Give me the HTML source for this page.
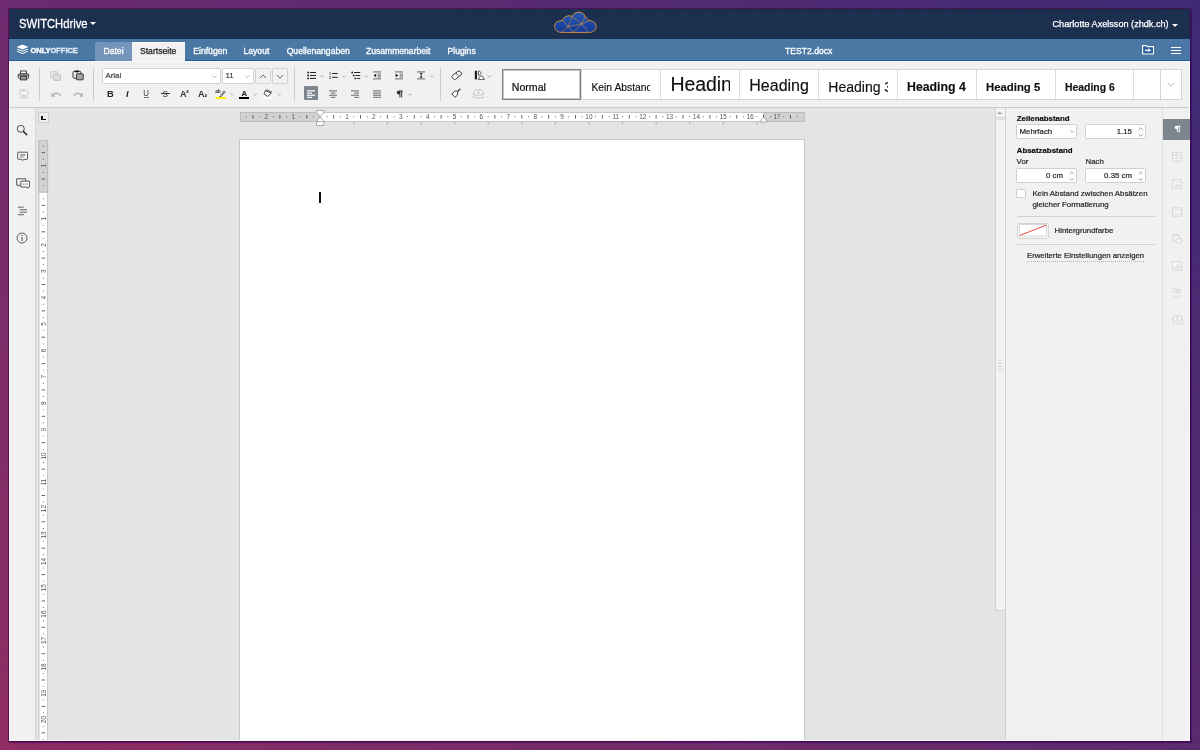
<!DOCTYPE html>
<html>
<head>
<meta charset="utf-8">
<title>TEST2.docx</title>
<style>
*{box-sizing:border-box;margin:0;padding:0}
html,body{width:1200px;height:750px;overflow:hidden}
body{font-family:"Liberation Sans",sans-serif;font-size:7.85px;color:#2a2a2a;position:relative;
 background:#6b2c74;}
#bg{position:absolute;left:0;top:0;width:1200px;height:750px;background:linear-gradient(to right,#6d2b6f 0%,#3f2b75 100%)}
#bg2{position:absolute;left:0;top:0;width:1200px;height:750px;background:linear-gradient(to right,#8f2e63 0%,#5b2b6e 100%);
 -webkit-mask-image:linear-gradient(to bottom,rgba(0,0,0,0) 0%,rgba(0,0,0,1) 100%);mask-image:linear-gradient(to bottom,rgba(0,0,0,0) 0%,rgba(0,0,0,1) 100%)}
#wout{position:absolute;left:9px;top:9px;width:1181px;height:732px;background:#f9f9f9;box-shadow:0 0 0 1px rgba(70,0,70,0.6),1px 1px 1px 1px rgba(40,0,90,0.45)}
#wout .e1{position:absolute;left:0;top:0;width:1px;height:30px;background:#2b2c58}
#wout .e2{position:absolute;left:0;top:30px;width:1px;height:22px;background:#4b77a4;border-bottom:1px solid #1f5c95}
#win{will-change:transform;position:absolute;left:10px;top:9px;width:1180px;height:732px;background:#e4e4e4;overflow:hidden}
.abs{position:absolute}
.t{position:absolute;white-space:nowrap;line-height:1;-webkit-text-stroke:0.22px}
/* header */
#hdr{position:absolute;left:0;top:0;width:1180px;height:30px;background:#1c3050;background-image:repeating-linear-gradient(to right,rgba(0,0,0,0.07) 0,rgba(0,0,0,0.07) 1px,rgba(0,0,0,0) 1px,rgba(0,0,0,0) 3px);box-shadow:inset 0 1px 0 #14324c,inset 0 -1px 0 #17304e}
#tabs{position:absolute;left:0;top:30px;width:1180px;height:22px;background:#4b77a4;border-bottom:1px solid #1f5c95}
#tabs .t{color:#fff;font-size:8.6px;top:7.5px;-webkit-text-stroke:0.3px #fff}
#tool{position:absolute;left:0;top:52px;width:1180px;height:47px;background:#f1f1f1;border-bottom:1px solid #cbcbcb;border-top:1px solid #fafafa}
#left{position:absolute;left:0;top:99px;width:26px;height:633px;background:#f1f1f1;border-right:1px solid #d5d5d5}
#right{position:absolute;left:995px;top:99px;width:157px;height:633px;background:#f1f1f1;border-left:1px solid #d0d0d0}
#strip{position:absolute;left:1152px;top:99px;width:28px;height:633px;background:#f1f1f1;border-left:1px solid #dedede}
#page{position:absolute;left:229px;top:130px;width:566px;height:620px;background:#fff;border:1px solid #c6c8ca}
.sep{position:absolute;width:1px;background:#cbcbcb;top:7px;height:33px}
.box{position:absolute;background:#fff;border:1px solid #cfcfcf;border-radius:1.5px}
.sepv{position:absolute;top:67.5px;height:33px;width:1px;background:#cdcdcd}
.btn{position:absolute;background:#f1f1f1;border:1px solid #d2d2d2;border-radius:1.5px}
.gi{position:absolute;top:70px;width:79px;height:29px;border-left:1px solid #dcdcdc;overflow:hidden}
.gi span{position:absolute;left:10px;width:59px;overflow:hidden;white-space:nowrap;line-height:1;color:#111;display:block;padding-bottom:6px;-webkit-text-stroke:0.15px}
.rb{font-weight:bold;color:#111}
</style>
</head>
<body>
<div id="bg"></div><div id="bg2"></div>
<div id="wout"><div class="e1"></div><div class="e2"></div></div>
<div id="win">
 <div id="hdr">
  <div class="t" id="sw" style="left:8.5px;top:7.5px;font-size:13px;color:#fff;-webkit-text-stroke:0.3px #fff;transform-origin:0 0;transform:scaleX(0.862)">SWITCHdrive</div>
  <div class="abs" style="left:79.6px;top:12.6px;width:0;height:0;border-left:3.1px solid transparent;border-right:3.1px solid transparent;border-top:3.2px solid #fff"></div>
  <svg class="abs" style="left:530px;top:-4px" width="70" height="40" viewBox="0 0 1200 686"><defs><linearGradient id="cg" x1="0" y1="0" x2="0" y2="1"><stop offset="0" stop-color="#2a58b4"/><stop offset="1" stop-color="#123a98"/></linearGradient></defs>
   <path d="M372 470 C300 470 250 425 250 365 C250 305 305 262 385 270 C400 215 445 185 500 185 C520 185 540 190 552 198 C570 150 615 122 665 122 C720 122 760 155 772 200 C800 215 822 240 830 268 C905 262 962 305 962 370 C962 430 910 470 850 470 Z" fill="url(#cg)" stroke="#e8962a" stroke-width="15" stroke-linejoin="round"/>
   <g stroke="#e8952b" stroke-width="9" fill="none" stroke-linecap="round">
    <path d="M483 370 L715 325 M483 370 L552 200 M483 370 L395 272 M483 370 L372 466 M483 370 L572 466 M715 325 L572 466 M715 325 L832 466 M715 325 L565 212 M715 325 L772 202 M715 325 L832 270"/>
   </g>
   <circle cx="483" cy="370" r="13" fill="#e8952b"/><circle cx="715" cy="325" r="13" fill="#e8952b"/>
  </svg>
  <div class="t" id="usr" style="left:1042.5px;top:10.5px;font-size:9.15px;color:#fff;-webkit-text-stroke:0.25px #fff">Charlotte Axelsson (zhdk.ch)</div>
  <div class="abs" style="left:1162.4px;top:14.6px;width:0;height:0;border-left:3px solid transparent;border-right:3px solid transparent;border-top:3px solid #fff"></div>
 </div>
 <div id="tabs">
  <svg class="abs" style="left:5.6px;top:5px" width="13" height="11" viewBox="0 0 24 22" preserveAspectRatio="none"><g fill="#fff"><path d="M12 1 L23 6 L12 11 L1 6Z"/><path d="M3.2 9.3 L1 10.5 L12 15.5 L23 10.5 L20.8 9.3 L12 13.3Z"/><path d="M3.2 13.8 L1 15 L12 20 L23 15 L20.8 13.8 L12 17.8Z"/></g></svg>
  <div class="t" style="left:20.5px;top:7.8px;font-size:7.6px;font-weight:bold;letter-spacing:-0.1px">ONLY<span style="color:#c9d9ea">OFFICE</span></div>
  <div class="abs" style="left:85px;top:3px;width:37px;height:19px;background:#7594ba"></div>
  <div class="abs" style="left:122px;top:3px;width:53px;height:20px;background:#f1f1f1;border-top:1px solid #fbfbfb"></div>
  <div class="t" style="left:93.5px">Datei</div>
  <div class="t" style="left:130px;color:#222;-webkit-text-stroke:0.25px #222">Startseite</div>
  <div class="t" style="left:183.3px">Einfügen</div>
  <div class="t" style="left:233.5px">Layout</div>
  <div class="t" style="left:276.7px">Quellenangaben</div>
  <div class="t" style="left:355.9px">Zusammenarbeit</div>
  <div class="t" style="left:437.5px">Plugins</div>
  <div class="t" style="left:775px">TEST2.docx</div>
  <svg class="abs" style="left:1131.5px;top:6.3px" width="12.2" height="9.6" viewBox="0 0 12.2 9.6"><path d="M0.6 0.6 H4.4 L5.4 1.6 H11.6 V9 H0.6Z" fill="#2e619b" stroke="#fff" stroke-width="1.1"/><path d="M3 5.3 H7.4" stroke="#fff" stroke-width="1.3"/><path d="M6.5 3.3 L9 5.3 L6.5 7.3Z" fill="#fff"/></svg>
  <div class="abs" style="left:1161px;top:8px;width:10px;height:1.2px;background:#fff"></div>
  <div class="abs" style="left:1161px;top:11px;width:10px;height:1.2px;background:#fff"></div>
  <div class="abs" style="left:1161px;top:14px;width:10px;height:1.2px;background:#fff"></div>
 </div>
 <div id="tool"></div>
 <div id="left"></div>
 <div id="page"></div>
 <div id="right"></div>
 <div id="strip"></div>
<div id="tl" style="position:absolute;left:-10px;top:-9px;width:1200px;height:750px">
<!-- separators -->
<div class="sepv" style="left:39px"></div><div class="sepv" style="left:93px"></div><div class="sepv" style="left:294px"></div><div class="sepv" style="left:440px"></div>
<!-- print -->
<svg class="abs" style="left:17px;top:70px" width="13" height="11" viewBox="0 0 13 11">
 <rect x="3.6" y="1" width="5.8" height="3" fill="#fff" stroke="#333" stroke-width="0.9"/>
 <rect x="1.3" y="3.9" width="10.4" height="4.3" rx="1" fill="#fff" stroke="#333" stroke-width="1"/>
 <rect x="1.8" y="4.7" width="9.4" height="1" fill="#333"/>
 <rect x="3.4" y="6.3" width="6.2" height="3.6" fill="#999" stroke="#333" stroke-width="0.9"/>
</svg>
<!-- save disabled -->
<svg class="abs" style="left:18.5px;top:88.5px" width="10" height="10" viewBox="0 0 10 10" opacity="0.9">
 <path d="M1 0.8 H7 L9 2.6 V8.8 H1Z" fill="#f7f7f7" stroke="#c4c4c4" stroke-width="0.9"/>
 <rect x="3.2" y="0.8" width="3" height="2" fill="#cfcfcf"/>
 <rect x="2.8" y="5.4" width="4.4" height="2.4" fill="#d6d6d6"/>
</svg>
<!-- copy disabled -->
<svg class="abs" style="left:50px;top:70.5px" width="12" height="10" viewBox="0 0 12 10">
 <rect x="0.7" y="0.8" width="6.8" height="5.6" rx="0.3" fill="#e9e9e9" stroke="#c2c2c2" stroke-width="0.9"/>
 <rect x="3.7" y="3.6" width="7" height="5.8" rx="0.3" fill="#dedede" stroke="#bdbdbd" stroke-width="0.9"/>
</svg>
<!-- paste -->
<svg class="abs" style="left:71.5px;top:70px" width="13" height="11" viewBox="0 0 13 11">
 <rect x="1" y="1.4" width="7.8" height="6.8" rx="1" fill="#f3f3f3" stroke="#333" stroke-width="1"/>
 <rect x="3" y="0.5" width="3.8" height="1.8" fill="#111"/>
 <rect x="4.4" y="3.8" width="6.8" height="6" rx="0.6" fill="#a8a8a8" stroke="#333" stroke-width="1"/>
</svg>
<!-- undo / redo disabled -->
<svg class="abs" style="left:51px;top:90.5px" width="10.5" height="6.5" viewBox="0 0 10.5 6.5">
 <path d="M0.2 1.4 L0.2 5.8 L4.6 5.8Z" fill="#b6b6b6"/><path d="M1.8 4.4 C3.6 1.6 7 1.4 9.8 4.8" fill="none" stroke="#b6b6b6" stroke-width="1.5"/>
</svg>
<svg class="abs" style="left:72.5px;top:90.5px" width="10.5" height="6.5" viewBox="0 0 10.5 6.5">
 <path d="M10.3 1.4 L10.3 5.8 L5.9 5.8Z" fill="#b6b6b6"/><path d="M8.7 4.4 C6.9 1.6 3.5 1.4 0.7 4.8" fill="none" stroke="#b6b6b6" stroke-width="1.5"/>
</svg>
<!-- font combos -->
<div class="box" style="left:102px;top:68px;width:119px;height:16px"></div>
<div class="t" style="left:105.5px;top:72px;font-size:7.85px;color:#444">Arial</div>
<svg class="abs cv" style="left:212px;top:74.5px" width="5" height="3.4" viewBox="0 0 5 3.4"><path d="M0.4 0.5 L2.5 2.7 L4.6 0.5" fill="none" stroke="#999" stroke-width="0.7"/></svg>
<div class="box" style="left:222px;top:68px;width:32px;height:16px"></div>
<div class="t" style="left:225.5px;top:72px;font-size:7.85px;color:#444">11</div>
<svg class="abs cv" style="left:245px;top:74.5px" width="5" height="3.4" viewBox="0 0 5 3.4"><path d="M0.4 0.5 L2.5 2.7 L4.6 0.5" fill="none" stroke="#999" stroke-width="0.7"/></svg>
<div class="btn" style="left:255px;top:68px;width:16px;height:16px"></div>
<svg class="abs" style="left:259px;top:73.5px" width="8" height="5" viewBox="0 0 8 5"><path d="M0.8 4.2 L4 1 L7.2 4.2" fill="none" stroke="#555" stroke-width="0.9"/></svg>
<div class="btn" style="left:272px;top:68px;width:16px;height:16px"></div>
<svg class="abs" style="left:276px;top:73.5px" width="8" height="5" viewBox="0 0 8 5"><path d="M0.8 0.9 L4 4.1 L7.2 0.9" fill="none" stroke="#555" stroke-width="0.9"/></svg>
<!-- B I U S A2 A2 -->
<div class="t g" style="left:107px;top:89.6px;font-size:9.3px;font-weight:bold;color:#222;-webkit-text-stroke:0">B</div>
<div class="t g" style="left:126px;top:89.6px;font-size:9.3px;font-weight:bold;font-style:italic;color:#222;-webkit-text-stroke:0">I</div>
<div class="t g" style="left:143.3px;top:88.7px;font-size:8.6px;color:#3a3a3a;-webkit-text-stroke:0;transform:scaleX(0.92);transform-origin:50% 50%">U</div>
<div class="abs" style="left:143.8px;top:96.8px;width:5.3px;height:0.9px;background:#777"></div>
<div class="t g" style="left:161.95px;top:88.7px;font-size:9.6px;color:#333;-webkit-text-stroke:0;transform:scaleX(0.85);transform-origin:50% 50%">S</div>
<div class="abs" style="left:160.8px;top:93px;width:9.4px;height:0.9px;background:#333"></div>
<div class="t g" style="left:180px;top:89.7px;font-size:9.1px;font-weight:bold;color:#333;-webkit-text-stroke:0">A</div>
<div class="t g" style="left:186.2px;top:89.6px;font-size:4px;font-weight:bold;color:#333">2</div>
<div class="t g" style="left:197.9px;top:89.7px;font-size:9.1px;font-weight:bold;color:#333;-webkit-text-stroke:0">A</div>
<div class="t g" style="left:204.8px;top:93.6px;font-size:4px;font-weight:bold;color:#333">2</div>
<!-- highlight -->
<svg class="abs" style="left:215px;top:89px" width="11.5" height="10.5" viewBox="0 0 11.5 10.5">
 <text x="0.2" y="4.2" font-family="Liberation Sans" font-size="4.8" font-weight="bold" fill="#333">ab</text>
 <path d="M5.3 6 L8.8 1.2 L10.8 2.7 L7.2 7.4Z" fill="#8a8a8a"/><path d="M5 6.4 L6.8 7.7 L4.4 8Z" fill="#222"/>
 <rect x="0.4" y="8" width="10.4" height="2" fill="#ffee00"/>
</svg>
<svg class="abs cv" style="left:229.6px;top:93px" width="4.6" height="3" viewBox="0 0 4.6 3"><path d="M0.4 0.4 L2.3 2.3 L4.2 0.4" fill="none" stroke="#9a9a9a" stroke-width="0.7"/></svg>
<!-- font color -->
<div class="t g" style="left:241.6px;top:89.8px;font-size:7.6px;color:#333;font-weight:bold">A</div>
<div class="abs" style="left:239.2px;top:96.9px;width:10px;height:2.1px;background:#000"></div>
<svg class="abs cv" style="left:252.8px;top:93px" width="4.6" height="3" viewBox="0 0 4.6 3"><path d="M0.4 0.4 L2.3 2.3 L4.2 0.4" fill="none" stroke="#9a9a9a" stroke-width="0.7"/></svg>
<!-- shape fill -->
<svg class="abs" style="left:262px;top:89px" width="11.5" height="10.5" viewBox="0 0 11.5 10.5">
 <path d="M3.5 1.6 L9.2 4 L5.6 7.5 L2 4.7Z" fill="#fff" stroke="#333" stroke-width="0.95" stroke-linejoin="round"/>
 <path d="M4.2 0.8 L9.7 3.1" fill="none" stroke="#333" stroke-width="0.8" stroke-linecap="round"/>
 <rect x="0.5" y="7.9" width="10" height="2.1" fill="#fff"/>
</svg>
<svg class="abs cv" style="left:276.5px;top:93px" width="4.6" height="3" viewBox="0 0 4.6 3"><path d="M0.4 0.4 L2.3 2.3 L4.2 0.4" fill="none" stroke="#9a9a9a" stroke-width="0.7"/></svg>
<!-- bullets -->
<svg class="abs" style="left:306.5px;top:71px" width="10" height="9" viewBox="0 0 10 9">
 <g fill="#222"><circle cx="1.1" cy="1.5" r="0.95"/><circle cx="1.1" cy="4.5" r="0.95"/><circle cx="1.1" cy="7.4" r="0.95"/>
 <rect x="3" y="1" width="6" height="1"/><rect x="3" y="4" width="6" height="1"/><rect x="3" y="6.9" width="6" height="1"/></g></svg>
<svg class="abs cv" style="left:319.8px;top:74.8px" width="4.6" height="3" viewBox="0 0 4.6 3"><path d="M0.4 0.4 L2.3 2.3 L4.2 0.4" fill="none" stroke="#9a9a9a" stroke-width="0.7"/></svg>
<!-- numbered -->
<svg class="abs" style="left:328.5px;top:71px" width="10" height="9" viewBox="0 0 10 9">
 <g fill="#222"><text x="0" y="3.7" font-family="Liberation Sans" font-size="3.8" font-weight="bold" fill="#444">1</text><text x="0" y="8.2" font-family="Liberation Sans" font-size="3.8" font-weight="bold" fill="#444">2</text>
 <rect x="3.1" y="2" width="5.6" height="1"/><rect x="3.1" y="5.8" width="5.6" height="1"/></g></svg>
<svg class="abs cv" style="left:341.8px;top:74.8px" width="4.6" height="3" viewBox="0 0 4.6 3"><path d="M0.4 0.4 L2.3 2.3 L4.2 0.4" fill="none" stroke="#9a9a9a" stroke-width="0.7"/></svg>
<!-- multilevel -->
<svg class="abs" style="left:350.5px;top:71px" width="10" height="9" viewBox="0 0 10 9">
 <g fill="#222"><circle cx="1.2" cy="1.5" r="0.95"/><circle cx="2.7" cy="4.5" r="0.95"/><circle cx="4.3" cy="7.4" r="0.95"/>
 <rect x="3" y="1" width="6.2" height="1"/><rect x="4.5" y="4" width="4.7" height="1"/><rect x="6.1" y="6.9" width="3.1" height="1"/></g></svg>
<svg class="abs cv" style="left:363.8px;top:74.8px" width="4.6" height="3" viewBox="0 0 4.6 3"><path d="M0.4 0.4 L2.3 2.3 L4.2 0.4" fill="none" stroke="#9a9a9a" stroke-width="0.7"/></svg>
<!-- outdent -->
<svg class="abs" style="left:372.8px;top:71px" width="8.4" height="9" viewBox="0 0 8.4 9">
 <g fill="#8a8a8a"><rect x="0" y="0.2" width="8.2" height="1.3"/><rect x="0" y="7.2" width="8.2" height="1.3"/><rect x="4.6" y="2.3" width="3.6" height="1.2"/><rect x="4.6" y="3.9" width="3.6" height="1.2"/><rect x="4.6" y="5.5" width="3.6" height="1.2"/></g>
 <path d="M0.6 4.4 L3.2 2.6 L3.2 6.2Z" fill="#111"/></svg>
<!-- indent -->
<svg class="abs" style="left:394.8px;top:71px" width="8.4" height="9" viewBox="0 0 8.4 9">
 <g fill="#8a8a8a"><rect x="0" y="0.2" width="8.2" height="1.3"/><rect x="0" y="7.2" width="8.2" height="1.3"/><rect x="4.6" y="2.3" width="3.6" height="1.2"/><rect x="4.6" y="3.9" width="3.6" height="1.2"/><rect x="4.6" y="5.5" width="3.6" height="1.2"/></g>
 <path d="M3.2 4.4 L0.6 2.6 L0.6 6.2Z" fill="#111"/></svg>
<!-- line spacing -->
<svg class="abs" style="left:416.8px;top:71px" width="8.4" height="9" viewBox="0 0 8.4 9">
 <g fill="#8a8a8a"><rect x="0" y="0.2" width="8.2" height="1.4"/><rect x="0" y="7.1" width="8.2" height="1.4"/></g>
 <path d="M4.1 2 V6.7 M2.8 2.5 H5.4 M2.8 6.2 H5.4" stroke="#222" stroke-width="0.9" fill="none"/></svg>
<svg class="abs cv" style="left:430px;top:74.8px" width="4.6" height="3" viewBox="0 0 4.6 3"><path d="M0.4 0.4 L2.3 2.3 L4.2 0.4" fill="none" stroke="#9a9a9a" stroke-width="0.7"/></svg>
<!-- align left active -->
<div class="abs" style="left:304px;top:86.2px;width:14px;height:13.6px;background:#7d868f;border-radius:1px"></div>
<svg class="abs" style="left:306.8px;top:89.6px" width="8.4" height="8.4" viewBox="0 0 8.4 8.4">
 <g fill="#fff" opacity="0.92"><rect x="0" y="0.2" width="8.2" height="1.3"/><rect x="0" y="2.4" width="5" height="1.3"/><rect x="0" y="4.6" width="8.2" height="1.3"/><rect x="0" y="6.8" width="5" height="1.3"/></g></svg>
<!-- center -->
<svg class="abs" style="left:328.8px;top:89.6px" width="8.4" height="8.4" viewBox="0 0 8.4 8.4">
 <g fill="#858585"><rect x="0" y="0.2" width="8.2" height="1.3"/><rect x="1.8" y="2.4" width="4.6" height="1.3"/><rect x="0" y="4.6" width="8.2" height="1.3"/><rect x="1.8" y="6.8" width="4.6" height="1.3"/></g></svg>
<!-- right -->
<svg class="abs" style="left:350.8px;top:89.6px" width="8.4" height="8.4" viewBox="0 0 8.4 8.4">
 <g fill="#858585"><rect x="0" y="0.2" width="8.2" height="1.3"/><rect x="3.2" y="2.4" width="5" height="1.3"/><rect x="0" y="4.6" width="8.2" height="1.3"/><rect x="3.2" y="6.8" width="5" height="1.3"/></g></svg>
<!-- justify -->
<svg class="abs" style="left:372.8px;top:89.6px" width="8.4" height="8.4" viewBox="0 0 8.4 8.4">
 <g fill="#858585"><rect x="0" y="0.2" width="8.2" height="1.3"/><rect x="0" y="2.4" width="8.2" height="1.3"/><rect x="0" y="4.6" width="8.2" height="1.3"/><rect x="0" y="6.8" width="8.2" height="1.3"/></g></svg>
<!-- pilcrow -->
<svg class="abs" style="left:395.5px;top:89.5px" width="7.5" height="8" viewBox="0 0 7.5 8">
 <path d="M3.4 0.5 H6.8 V1.5 H6.2 V7.5 H5.2 V1.5 H4.4 V7.5 H3.4 V4.4 C1.9 4.4 0.7 3.6 0.7 2.45 C0.7 1.3 1.9 0.5 3.4 0.5Z" fill="#333"/></svg>
<svg class="abs cv" style="left:407.8px;top:93px" width="4.6" height="3" viewBox="0 0 4.6 3"><path d="M0.4 0.4 L2.3 2.3 L4.2 0.4" fill="none" stroke="#9a9a9a" stroke-width="0.7"/></svg>
<!-- eraser -->
<svg class="abs" style="left:450.5px;top:70px" width="11.5" height="10.5" viewBox="0 0 11.5 10.5">
 <g transform="rotate(-38 5.7 5.3)"><rect x="0.9" y="2.9" width="9.8" height="4.8" rx="1.6" fill="#fbfbfb" stroke="#333" stroke-width="0.9"/><path d="M6.6 2.9 V7.7" stroke="#333" stroke-width="0.8"/></g></svg>
<!-- copy style -->
<svg class="abs" style="left:473.5px;top:70px" width="11.5" height="10.5" viewBox="0 0 11.5 10.5">
 <rect x="0.8" y="0.8" width="2.2" height="8.6" fill="#222"/>
 <path d="M4.4 1 C7.6 1.2 7.6 4.2 5 5.2 L4.4 5.2 Z" fill="#fff" stroke="#333" stroke-width="0.8"/>
 <path d="M4.2 9.4 L6.6 5.6 L8.8 6.6 L10.4 9.4Z" fill="#fff" stroke="#333" stroke-width="0.8" stroke-linejoin="round"/></svg>
<svg class="abs cv" style="left:487px;top:74.8px" width="4.6" height="3" viewBox="0 0 4.6 3"><path d="M0.4 0.4 L2.3 2.3 L4.2 0.4" fill="none" stroke="#9a9a9a" stroke-width="0.7"/></svg>
<!-- paintbrush -->
<svg class="abs" style="left:450.5px;top:88.3px" width="11" height="10.5" viewBox="0 0 11 10.5">
 <path d="M0.8 5.8 L4.2 3 L7 3.2 L6.2 7.4 L4 9.4Z" fill="#fbfbfb" stroke="#333" stroke-width="0.9" stroke-linejoin="round"/>
 <path d="M6.8 3.4 L8.6 1.4" stroke="#444" stroke-width="1.3" stroke-linecap="round"/><circle cx="8.8" cy="1.4" r="0.9" fill="#555"/></svg>
<!-- mail merge disabled -->
<svg class="abs" style="left:472.8px;top:88.6px" width="11" height="10" viewBox="0 0 11 10">
 <path d="M0.7 3.4 L2.6 0.8 H8.2 L10.2 3.4 V8.8 H0.7Z" fill="#f5f5f5" stroke="#c4c4c4" stroke-width="0.9" stroke-linejoin="round"/>
 <rect x="4.4" y="1.6" width="2" height="3.6" fill="#cdcdcd"/><path d="M0.9 3.6 L2.4 6.2 H8.4 L10 3.6" fill="none" stroke="#c4c4c4" stroke-width="0.9"/></svg>
<!-- left panel icons -->
<svg class="abs" style="left:16px;top:123.5px" width="12" height="12" viewBox="0 0 12 12"><circle cx="4.8" cy="4.8" r="3.5" fill="none" stroke="#444" stroke-width="0.95"/><path d="M7.4 7.4 L10.6 10.6" stroke="#333" stroke-width="1.5" stroke-linecap="round"/></svg>
<svg class="abs" style="left:16.5px;top:151px" width="11.5" height="11" viewBox="0 0 11.5 11"><path d="M1.2 1.2 H10 Q10.5 1.2 10.5 1.7 V7.8 Q10.5 8.3 10 8.3 H6.5 L5.6 9.6 L4.7 8.3 H1.2 Q0.7 8.3 0.7 7.8 V1.7 Q0.7 1.2 1.2 1.2Z" fill="#fff" stroke="#444" stroke-width="0.9"/><path d="M2.8 3.4 H8.4 M2.8 4.8 H8.4 M2.8 6.2 H6.4" stroke="#777" stroke-width="0.8"/></svg>
<svg class="abs" style="left:15.6px;top:178.4px" width="14.5" height="11.5" viewBox="0 0 14.5 11.5"><path d="M0.7 0.8 H9.8 V3 M0.7 0.8 V7 H2 L2.6 8.2 L3.4 7 H4.6" fill="none" stroke="#444" stroke-width="0.9"/><path d="M4.9 3.2 H13.6 V9 H12.4 L11.8 10.3 L11 9 H4.9Z" fill="#fff" stroke="#444" stroke-width="0.9"/><g fill="#444"><rect x="6.9" y="5.6" width="1" height="1"/><rect x="8.8" y="5.6" width="1" height="1"/><rect x="10.7" y="5.6" width="1" height="1"/></g></svg>
<svg class="abs" style="left:17px;top:205.5px" width="11" height="10" viewBox="0 0 11 10"><path d="M0.8 1.2 H6.8 M2.8 3.7 H10 M2.8 6.2 H10 M0.8 8.7 H6.8" stroke="#555" stroke-width="0.9"/></svg>
<svg class="abs" style="left:16px;top:232px" width="12" height="12" viewBox="0 0 12 12"><circle cx="6" cy="6" r="5" fill="none" stroke="#444" stroke-width="0.85"/><path d="M6 5 V9" stroke="#444" stroke-width="1"/><circle cx="6" cy="3.4" r="0.6" fill="#444"/></svg>
<!-- tab selector -->
<div class="abs" style="left:38px;top:112px;width:11px;height:11px;background:#eeeeee;border:1px solid #cdcdcd"></div>
<div class="abs" style="left:41.3px;top:115.6px;width:1.6px;height:4.5px;background:#111"></div>
<div class="abs" style="left:41.3px;top:118.6px;width:4.5px;height:1.6px;background:#111"></div>
<!-- rulers -->
<svg class="abs" style="left:240px;top:108px" width="570" height="20" viewBox="0 0 570 20">
<rect x="0.5" y="4.5" width="563.8" height="9" fill="#fff" stroke="#c6c6c6" stroke-width="1"/>
<rect x="0.5" y="4.5" width="79.7" height="9" fill="#d2d2d2" stroke="#bcbcbc" stroke-width="1"/>
<rect x="523.6" y="4.5" width="40.7" height="9" fill="#d2d2d2" stroke="#bcbcbc" stroke-width="1"/>
<path d="M13.0 7V10.6M39.9 7V10.6M66.8 7V10.6M93.6 7V10.6M120.5 7V10.6M147.4 7V10.6M174.3 7V10.6M201.1 7V10.6M228.0 7V10.6M254.9 7V10.6M281.8 7V10.6M308.6 7V10.6M335.5 7V10.6M362.4 7V10.6M389.3 7V10.6M416.1 7V10.6M443.0 7V10.6M469.9 7V10.6M496.8 7V10.6M523.6 7V10.6M550.5 7V10.6" stroke="#555" stroke-width="0.9" fill="none"/>
<path d="M5.8 8.35h0.9v0.9h-0.9zM19.3 8.35h0.9v0.9h-0.9zM32.7 8.35h0.9v0.9h-0.9zM46.2 8.35h0.9v0.9h-0.9zM59.6 8.35h0.9v0.9h-0.9zM73.0 8.35h0.9v0.9h-0.9zM86.5 8.35h0.9v0.9h-0.9zM99.9 8.35h0.9v0.9h-0.9zM113.3 8.35h0.9v0.9h-0.9zM126.8 8.35h0.9v0.9h-0.9zM140.2 8.35h0.9v0.9h-0.9zM153.7 8.35h0.9v0.9h-0.9zM167.1 8.35h0.9v0.9h-0.9zM180.5 8.35h0.9v0.9h-0.9zM194.0 8.35h0.9v0.9h-0.9zM207.4 8.35h0.9v0.9h-0.9zM220.8 8.35h0.9v0.9h-0.9zM234.3 8.35h0.9v0.9h-0.9zM247.7 8.35h0.9v0.9h-0.9zM261.2 8.35h0.9v0.9h-0.9zM274.6 8.35h0.9v0.9h-0.9zM288.0 8.35h0.9v0.9h-0.9zM301.5 8.35h0.9v0.9h-0.9zM314.9 8.35h0.9v0.9h-0.9zM328.3 8.35h0.9v0.9h-0.9zM341.8 8.35h0.9v0.9h-0.9zM355.2 8.35h0.9v0.9h-0.9zM368.7 8.35h0.9v0.9h-0.9zM382.1 8.35h0.9v0.9h-0.9zM395.5 8.35h0.9v0.9h-0.9zM409.0 8.35h0.9v0.9h-0.9zM422.4 8.35h0.9v0.9h-0.9zM435.8 8.35h0.9v0.9h-0.9zM449.3 8.35h0.9v0.9h-0.9zM462.7 8.35h0.9v0.9h-0.9zM476.2 8.35h0.9v0.9h-0.9zM489.6 8.35h0.9v0.9h-0.9zM503.0 8.35h0.9v0.9h-0.9zM516.5 8.35h0.9v0.9h-0.9zM529.9 8.35h0.9v0.9h-0.9zM543.3 8.35h0.9v0.9h-0.9zM556.8 8.35h0.9v0.9h-0.9z" fill="#555"/>
<g font-family="Liberation Sans" font-size="6.4" fill="#555" text-anchor="middle">
<text x="26.4" y="11.1">2</text>
<text x="53.3" y="11.1">1</text>
<text x="107.1" y="11.1">1</text>
<text x="133.9" y="11.1">2</text>
<text x="160.8" y="11.1">3</text>
<text x="187.7" y="11.1">4</text>
<text x="214.6" y="11.1">5</text>
<text x="241.4" y="11.1">6</text>
<text x="268.3" y="11.1">7</text>
<text x="295.2" y="11.1">8</text>
<text x="322.1" y="11.1">9</text>
<text x="348.9" y="11.1">10</text>
<text x="375.8" y="11.1">11</text>
<text x="402.7" y="11.1">12</text>
<text x="429.6" y="11.1">13</text>
<text x="456.4" y="11.1">14</text>
<text x="483.3" y="11.1">15</text>
<text x="510.2" y="11.1">16</text>
<text x="537.1" y="11.1">17</text>
</g>
<path d="M113.8 14.3V16.2M147.4 14.3V16.2M181.0 14.3V16.2M214.6 14.3V16.2M248.2 14.3V16.2M281.8 14.3V16.2M315.4 14.3V16.2M348.9 14.3V16.2M382.5 14.3V16.2M416.1 14.3V16.2M449.7 14.3V16.2M483.3 14.3V16.2M516.9 14.3V16.2" stroke="#8a8a8a" stroke-width="0.8" fill="none"/>
<path d="M76.6 2.6H83.8V4.4L80.2 8.6L76.6 4.4Z" fill="#fff" stroke="#90969c" stroke-width="0.8"/>
<path d="M80.2 9L83.8 13.2V17.4H76.6V13.2Z M76.6 13.6H83.8" fill="#fff" stroke="#90969c" stroke-width="0.8"/>
<path d="M523.6 9L527.2 13.2V13.9H520.0V13.2Z" fill="#fff" stroke="#90969c" stroke-width="0.8"/>
</svg>
<svg class="abs" style="left:36px;top:140px" width="14" height="601" viewBox="0 0 14 601">
<rect x="3" y="0.5" width="8.6" height="603" fill="#fff" stroke="#c6c6c6" stroke-width="1"/>
<rect x="3" y="0.5" width="8.6" height="51.7" fill="#d2d2d2" stroke="#bcbcbc" stroke-width="1"/>
<path d="M5.6 12.6H9.1M5.6 39.0H9.1M5.6 65.4H9.1M5.6 91.8H9.1M5.6 118.1H9.1M5.6 144.5H9.1M5.6 170.9H9.1M5.6 197.2H9.1M5.6 223.6H9.1M5.6 250.0H9.1M5.6 276.3H9.1M5.6 302.7H9.1M5.6 329.1H9.1M5.6 355.5H9.1M5.6 381.8H9.1M5.6 408.2H9.1M5.6 434.6H9.1M5.6 460.9H9.1M5.6 487.3H9.1M5.6 513.7H9.1M5.6 540.0H9.1M5.6 566.4H9.1M5.6 592.8H9.1" stroke="#555" stroke-width="0.9" fill="none"/>
<path d="M6.9 5.6h0.9v0.9h-0.9zM6.9 18.8h0.9v0.9h-0.9zM6.9 32.0h0.9v0.9h-0.9zM6.9 45.2h0.9v0.9h-0.9zM6.9 58.3h0.9v0.9h-0.9zM6.9 71.5h0.9v0.9h-0.9zM6.9 84.7h0.9v0.9h-0.9zM6.9 97.9h0.9v0.9h-0.9zM6.9 111.1h0.9v0.9h-0.9zM6.9 124.3h0.9v0.9h-0.9zM6.9 137.5h0.9v0.9h-0.9zM6.9 150.6h0.9v0.9h-0.9zM6.9 163.8h0.9v0.9h-0.9zM6.9 177.0h0.9v0.9h-0.9zM6.9 190.2h0.9v0.9h-0.9zM6.9 203.4h0.9v0.9h-0.9zM6.9 216.6h0.9v0.9h-0.9zM6.9 229.7h0.9v0.9h-0.9zM6.9 242.9h0.9v0.9h-0.9zM6.9 256.1h0.9v0.9h-0.9zM6.9 269.3h0.9v0.9h-0.9zM6.9 282.5h0.9v0.9h-0.9zM6.9 295.7h0.9v0.9h-0.9zM6.9 308.9h0.9v0.9h-0.9zM6.9 322.0h0.9v0.9h-0.9zM6.9 335.2h0.9v0.9h-0.9zM6.9 348.4h0.9v0.9h-0.9zM6.9 361.6h0.9v0.9h-0.9zM6.9 374.8h0.9v0.9h-0.9zM6.9 388.0h0.9v0.9h-0.9zM6.9 401.2h0.9v0.9h-0.9zM6.9 414.3h0.9v0.9h-0.9zM6.9 427.5h0.9v0.9h-0.9zM6.9 440.7h0.9v0.9h-0.9zM6.9 453.9h0.9v0.9h-0.9zM6.9 467.1h0.9v0.9h-0.9zM6.9 480.3h0.9v0.9h-0.9zM6.9 493.4h0.9v0.9h-0.9zM6.9 506.6h0.9v0.9h-0.9zM6.9 519.8h0.9v0.9h-0.9zM6.9 533.0h0.9v0.9h-0.9zM6.9 546.2h0.9v0.9h-0.9zM6.9 559.4h0.9v0.9h-0.9zM6.9 572.6h0.9v0.9h-0.9zM6.9 585.7h0.9v0.9h-0.9zM6.9 598.9h0.9v0.9h-0.9z" fill="#555"/>
<g font-family="Liberation Sans" font-size="6.4" fill="#555" text-anchor="middle">
<text transform="translate(9.7 25.8) rotate(-90)" x="0" y="0">1</text>
<text transform="translate(9.7 78.6) rotate(-90)" x="0" y="0">1</text>
<text transform="translate(9.7 104.9) rotate(-90)" x="0" y="0">2</text>
<text transform="translate(9.7 131.3) rotate(-90)" x="0" y="0">3</text>
<text transform="translate(9.7 157.7) rotate(-90)" x="0" y="0">4</text>
<text transform="translate(9.7 184.0) rotate(-90)" x="0" y="0">5</text>
<text transform="translate(9.7 210.4) rotate(-90)" x="0" y="0">6</text>
<text transform="translate(9.7 236.8) rotate(-90)" x="0" y="0">7</text>
<text transform="translate(9.7 263.2) rotate(-90)" x="0" y="0">8</text>
<text transform="translate(9.7 289.5) rotate(-90)" x="0" y="0">9</text>
<text transform="translate(9.7 315.9) rotate(-90)" x="0" y="0">10</text>
<text transform="translate(9.7 342.3) rotate(-90)" x="0" y="0">11</text>
<text transform="translate(9.7 368.6) rotate(-90)" x="0" y="0">12</text>
<text transform="translate(9.7 395.0) rotate(-90)" x="0" y="0">13</text>
<text transform="translate(9.7 421.4) rotate(-90)" x="0" y="0">14</text>
<text transform="translate(9.7 447.8) rotate(-90)" x="0" y="0">15</text>
<text transform="translate(9.7 474.1) rotate(-90)" x="0" y="0">16</text>
<text transform="translate(9.7 500.5) rotate(-90)" x="0" y="0">17</text>
<text transform="translate(9.7 526.9) rotate(-90)" x="0" y="0">18</text>
<text transform="translate(9.7 553.2) rotate(-90)" x="0" y="0">19</text>
<text transform="translate(9.7 579.6) rotate(-90)" x="0" y="0">20</text>
</g></svg>
<!-- end rulers -->
<!-- scrollbar -->
<div class="abs" style="left:995px;top:108px;width:10px;height:503px;background:#f2f2f2;border-left:1px solid #d3d3d3;border-bottom:1px solid #d0d0d0"></div>
<div class="abs" style="left:996px;top:117px;width:9px;height:1px;background:#d6d6d6"></div>
<div class="abs" style="left:996px;top:118px;width:9px;height:1px;background:#e9e9e9"></div>
<div class="abs" style="left:996px;top:119px;width:9px;height:1px;background:#d9d9d9"></div>
<svg class="abs" style="left:997.3px;top:111.2px" width="5.4" height="3.2" viewBox="0 0 5.4 3.2"><path d="M0.2 3 L2.7 0.4 L5.2 3Z" fill="#a6a6a6"/></svg>
<div class="abs" style="left:998px;top:360.3px;width:4px;height:0.9px;background:#d6d6d6"></div>
<div class="abs" style="left:998px;top:363.2px;width:4px;height:0.9px;background:#d6d6d6"></div>
<div class="abs" style="left:998px;top:366.1px;width:4px;height:0.9px;background:#d6d6d6"></div>
<div class="abs" style="left:998px;top:369px;width:4px;height:0.9px;background:#d6d6d6"></div>
<!-- right panel -->
<div class="t rb" style="left:1016.8px;top:114.9px">Zeilenabstand</div>
<div class="box" style="left:1016px;top:124px;width:61px;height:15px"></div>
<div class="t" style="left:1019.5px;top:128.2px">Mehrfach</div>
<svg class="abs cv" style="left:1069.6px;top:130.4px" width="4.4" height="3" viewBox="0 0 4.4 3"><path d="M0.4 0.5 L2.2 2.3 L4 0.5" fill="none" stroke="#8a8a8a" stroke-width="0.75"/></svg>
<div class="box" style="left:1085px;top:124px;width:61px;height:15px"></div>
<div class="t" style="left:1100px;width:32px;text-align:right;top:128.2px">1.15</div>
<svg class="abs" style="left:1137.5px;top:126.6px" width="5" height="10" viewBox="0 0 5 10"><path d="M0.7 2.9 L2.6 1 L4.5 2.9 M0.7 7.4 L2.6 9.3 L4.5 7.4" fill="none" stroke="#777" stroke-width="0.8"/></svg>
<div class="t rb" style="left:1016.8px;top:147.1px">Absatzabstand</div>
<div class="t" style="left:1016.6px;top:157.6px">Vor</div>
<div class="t" style="left:1085.6px;top:157.6px">Nach</div>
<div class="box" style="left:1016px;top:168px;width:61px;height:15px"></div>
<div class="t" style="left:1031px;width:32px;text-align:right;top:172.1px">0 cm</div>
<svg class="abs" style="left:1068.5px;top:170.5px" width="5" height="10" viewBox="0 0 5 10"><path d="M0.7 2.9 L2.6 1 L4.5 2.9 M0.7 7.4 L2.6 9.3 L4.5 7.4" fill="none" stroke="#777" stroke-width="0.8"/></svg>
<div class="box" style="left:1085px;top:168px;width:61px;height:15px"></div>
<div class="t" style="left:1100px;width:32px;text-align:right;top:172.1px">0.35 cm</div>
<svg class="abs" style="left:1137.5px;top:170.5px" width="5" height="10" viewBox="0 0 5 10"><path d="M0.7 2.9 L2.6 1 L4.5 2.9 M0.7 7.4 L2.6 9.3 L4.5 7.4" fill="none" stroke="#777" stroke-width="0.8"/></svg>
<div class="box" style="left:1016px;top:189px;width:10px;height:9px;border-radius:1px"></div>
<div class="t" style="left:1032.4px;top:190px">Kein Abstand zwischen Absätzen</div>
<div class="t" style="left:1032.4px;top:200.8px">gleicher Formatierung</div>
<div class="abs" style="left:1016.5px;top:215.8px;width:138px;height:1px;background:#d0d0d0"></div>
<div class="abs" style="left:1016.5px;top:222.5px;width:32.5px;height:16px;background:#f7f7f7;border:1px solid #d4d4d4;border-radius:1.5px"></div>
<svg class="abs" style="left:1019px;top:224px" width="28" height="12.5" viewBox="0 0 28 12.5"><rect x="0.5" y="0.5" width="27" height="11.5" fill="#fff" stroke="#cfcfcf" stroke-width="0.8"/><path d="M0.8 11.4 L27.2 1.2" stroke="#f03030" stroke-width="0.9"/></svg>
<div class="t" style="left:1054.6px;top:226.6px">Hintergrundfarbe</div>
<div class="abs" style="left:1016.5px;top:243.8px;width:138px;height:1px;background:#d0d0d0"></div>
<div class="t" style="left:1027px;top:251.6px;font-size:7.75px">Erweiterte Einstellungen anzeigen</div>
<div class="abs" style="left:1027px;top:260.8px;width:117px;height:0;border-top:1px dotted #b4b4b4"></div>
<div class="abs" style="left:1189px;top:61px;width:1px;height:680px;background:#fbfbfb"></div>
<!-- right strip -->
<div class="abs" style="left:1163px;top:119px;width:27px;height:21px;background:#7d868f"></div>
<svg class="abs" style="left:1173.6px;top:125.3px" width="7" height="8" viewBox="0 0 7.5 8"><path d="M3.4 0.5 H6.8 V1.5 H6.2 V7.5 H5.2 V1.5 H4.4 V7.5 H3.4 V4.4 C1.9 4.4 0.7 3.6 0.7 2.45 C0.7 1.3 1.9 0.5 3.4 0.5Z" fill="#fff"/></svg>
<svg class="abs" style="left:1172px;top:152.3px" width="10" height="10" viewBox="0 0 10 10"><rect x="0.6" y="0.6" width="8.8" height="8.6" fill="#f5f5f5" stroke="#d6d6d6" stroke-width="0.9"/><path d="M0.6 3.4H9.4M0.6 6.2H9.4M4.9 0.6V9.2" stroke="#d9d9d9" stroke-width="0.8"/></svg>
<svg class="abs" style="left:1172px;top:179.3px" width="10" height="10" viewBox="0 0 10 10"><rect x="0.6" y="0.6" width="8.8" height="8.6" fill="#f5f5f5" stroke="#d6d6d6" stroke-width="0.9"/><path d="M2 7.4 L4.4 4.4 L5.8 6 L7 4.8 L8.2 7.4Z" fill="#dedede"/><rect x="5.6" y="1.8" width="2.6" height="1.6" fill="#dedede"/></svg>
<svg class="abs" style="left:1172px;top:206.8px" width="10" height="10" viewBox="0 0 10 10"><rect x="0.6" y="0.8" width="8.8" height="8.4" fill="#f5f5f5" stroke="#d6d6d6" stroke-width="0.9"/><path d="M0.6 3H9.4M0.6 7H9.4" stroke="#d9d9d9" stroke-width="0.8"/></svg>
<svg class="abs" style="left:1172px;top:233.8px" width="11" height="10" viewBox="0 0 11 10"><path d="M6.6 0.8H0.7V7.6H3.8" fill="none" stroke="#d4d4d4" stroke-width="0.9"/><path d="M0.7 0.8H7.6V5" fill="none" stroke="#d4d4d4" stroke-width="0.9"/><ellipse cx="7" cy="6.8" rx="3.1" ry="2.3" fill="#f5f5f5" stroke="#d4d4d4" stroke-width="0.9"/></svg>
<svg class="abs" style="left:1172px;top:260.8px" width="10" height="10" viewBox="0 0 10 10"><rect x="0.6" y="0.6" width="8.8" height="8.6" fill="#f5f5f5" stroke="#d6d6d6" stroke-width="0.9"/><path d="M3 7.8V6 M5 7.8V4.6 M7 7.8V2.8" stroke="#d6d6d6" stroke-width="1.1"/></svg>
<div class="t" style="left:1172px;top:286.8px;font-size:8px;color:#d2d2d2">Ta</div>
<svg class="abs" style="left:1172px;top:294.8px" width="10" height="4" viewBox="0 0 10 4"><path d="M0.6 0.6 Q5 4.4 9.4 0.6" fill="none" stroke="#d6d6d6" stroke-width="0.8"/></svg>
<svg class="abs" style="left:1171.8px;top:315.3px" width="11" height="10" viewBox="0 0 11 10"><path d="M0.7 3.4 L2.6 0.8 H8.2 L10.2 3.4 V8.8 H0.7Z" fill="#f5f5f5" stroke="#d6d6d6" stroke-width="0.9" stroke-linejoin="round"/><rect x="4.4" y="1.6" width="2" height="3.6" fill="#dedede"/><path d="M0.9 3.6 L2.4 6.2 H8.4 L10 3.6" fill="none" stroke="#d6d6d6" stroke-width="0.9"/></svg>
<!-- cursor -->
<div class="abs" style="left:319.4px;top:192.2px;width:1.4px;height:11px;background:#111"></div>
<div class="abs" style="left:10px;top:740px;width:1180px;height:1px;background:#f4f4f4"></div>
<!-- style gallery -->
<div class="abs" style="left:502px;top:69px;width:680px;height:31px;background:#fff;border:1px solid #d4d4d4"></div>
<div class="gi" style="left:581px"><span style="font-size:10.35px;top:13.4px;left:9.4px;width:58.8px">Kein Abstand</span></div>
<div class="gi" style="left:660px"><span style="font-size:19.5px;top:4.8px;letter-spacing:-0.1px;left:9.5px">Heading 1</span></div>
<div class="gi" style="left:739px"><span style="font-size:16px;top:8.1px;left:9.3px;width:59.6px">Heading 2</span></div>
<div class="gi" style="left:818px"><span style="font-size:14px;top:9.6px;left:9.3px;width:59.7px">Heading 3</span></div>
<div class="gi" style="left:897px"><span style="font-size:12.3px;font-weight:bold;top:11.4px;color:#111;left:9px;width:60px">Heading 4</span></div>
<div class="gi" style="left:976px"><span style="font-size:11.35px;font-weight:bold;top:12.3px;color:#111;left:9px;width:60px">Heading 5</span></div>
<div class="gi" style="left:1055px"><span style="font-size:10.4px;font-weight:bold;top:13.2px;color:#111;left:9px;width:60px">Heading 6</span></div>
<div class="abs" style="left:1133px;top:70px;width:1px;height:29px;background:#dcdcdc"></div>
<div class="abs" style="left:1160px;top:70px;width:1px;height:29px;background:#d4d4d4"></div>
<div class="abs" style="left:502px;top:69px;width:79px;height:31px;border:1px solid #838383;background:#fff;box-shadow:inset 0 0 0 1px #c6c6c6"></div>
<div class="t" style="left:511.8px;top:81.9px;font-size:10.6px;color:#111">Normal</div>
<svg class="abs" style="left:1166.5px;top:81.5px" width="8" height="5" viewBox="0 0 8 5"><path d="M0.7 0.7 L4 4 L7.3 0.7" fill="none" stroke="#aaa" stroke-width="0.9"/></svg>
</div>

</div>
</body>
</html>
